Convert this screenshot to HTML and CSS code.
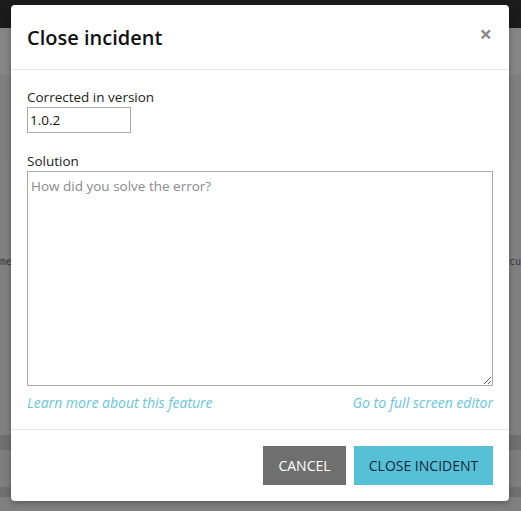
FILE: index.html
```html
<!DOCTYPE html>
<html>
<head>
<meta charset="utf-8">
<link rel="stylesheet" href="styles.css">
</head>
<body>
<div class="page">
  <div class="topbar"></div>
  <div class="band band-a"></div>
  <div class="band band-b"></div>
  <div class="content">
    <span class="bg-text">me</span>
    <span class="bg-text">cu</span>
  </div>
  <div class="band band-c"></div>
  <div class="band band-d"></div>
  <div class="band band-e"></div>
</div>
<div class="modal">
  <div class="modal-header">
    <h1 class="modal-title">Close incident</h1>
    <span class="close-x">&times;</span>
  </div>
  <div class="modal-body">
    <label class="field-label">Corrected in version</label>
    <input class="version-input" type="text" value="1.0.2">
    <label class="field-label solution-label">Solution</label>
    <textarea class="solution" placeholder="How did you solve the error?"></textarea>
    <div class="links">
      <a class="link">Learn more about this feature</a>
      <a class="link">Go to full screen editor</a>
    </div>
  </div>
  <div class="modal-footer">
    <button class="btn btn-cancel">CANCEL</button>
    <button class="btn btn-primary">CLOSE INCIDENT</button>
  </div>
</div>
</body>
</html>
```
FILE: styles.css
```css
html, body {
  margin: 0;
  padding: 0;
  height: 100%;
  background: #808080;
  font-family: "Open Sans", "Noto Sans", sans-serif;
  overflow: hidden;
}
.page {
  display: flex;
  flex-direction: column;
  height: 511px;
}
.topbar {
  height: 28px;
  background: #1b1b1b;
}
.band { flex: none; }
.band-a { height: 47px; background: #858585; }
.band-b { height: 85px; background: #7f7f7f; }
.content {
  flex: none;
  height: 275px;
  background: #808080;
  display: flex;
  justify-content: space-between;
  align-items: flex-start;
  padding-top: 95px;
  box-sizing: border-box;
}
.bg-text {
  font-family: "DejaVu Sans Mono", monospace;
  font-size: 10px;
  line-height: 14px;
  color: #3a3a3a;
}
.band-c { height: 15px; background: #6f6f6f; }
.band-d { height: 37px; background: #7e7e7e; }
.band-e { height: 10px; background: #707070; }

.modal {
  position: absolute;
  left: 11px;
  top: 5px;
  width: 498px;
  background: #fff;
  border-radius: 4px;
  box-shadow: 0 2px 6px rgba(0,0,0,0.3);
}
.modal-header {
  display: flex;
  align-items: center;
  justify-content: space-between;
  padding: 16px 16px 15px;
  border-bottom: 1px solid #e5e5e5;
}
.modal-title {
  margin: 0;
  font-size: 20px;
  font-weight: 600;
  line-height: 33px;
  color: #111;
}
.close-x {
  font-size: 22px;
  font-weight: 700;
  color: #8a8a8a;
  line-height: 20px;
  margin-top: -10px;
  margin-right: 1px;
}
.modal-body {
  display: flex;
  flex-direction: column;
  align-items: flex-start;
  padding: 17px 16px 16px;
}
.field-label {
  font-size: 13.5px;
  line-height: 20px;
  color: #222;
}
.solution-label { margin-top: 18px; }
.version-input {
  box-sizing: border-box;
  width: 104px;
  height: 26px;
  margin: 0;
  border: 1px solid #a9a9a9;
  padding: 0 2px;
  font-family: inherit;
  font-size: 13.5px;
  color: #111;
  outline: none;
}
.solution {
  box-sizing: border-box;
  width: 466px;
  height: 215px;
  margin: 0;
  border: 1px solid #a9a9a9;
  padding: 4px 3px;
  font-family: inherit;
  font-size: 13.5px;
  line-height: 20px;
  resize: both;
  outline: none;
}
.solution::placeholder { color: #8a8a8a; }
.links {
  display: flex;
  justify-content: space-between;
  width: 100%;
  margin-top: 7px;
}
.link {
  font-size: 14px;
  line-height: 20px;
  font-style: italic;
  color: #66c6dd;
  cursor: pointer;
}
.modal-footer {
  display: flex;
  justify-content: flex-end;
  gap: 8px;
  padding: 16px 16px 16px;
  border-top: 1px solid #e5e5e5;
}
.btn {
  height: 39px;
  border: none;
  border-radius: 0;
  font-family: inherit;
  font-size: 14px;
  padding: 0;
  cursor: pointer;
}
.btn-cancel {
  width: 83px;
  background: #6f6f6f;
  color: #fff;
}
.btn-primary {
  width: 139px;
  background: #56c1d6;
  color: #16263a;
}
```
